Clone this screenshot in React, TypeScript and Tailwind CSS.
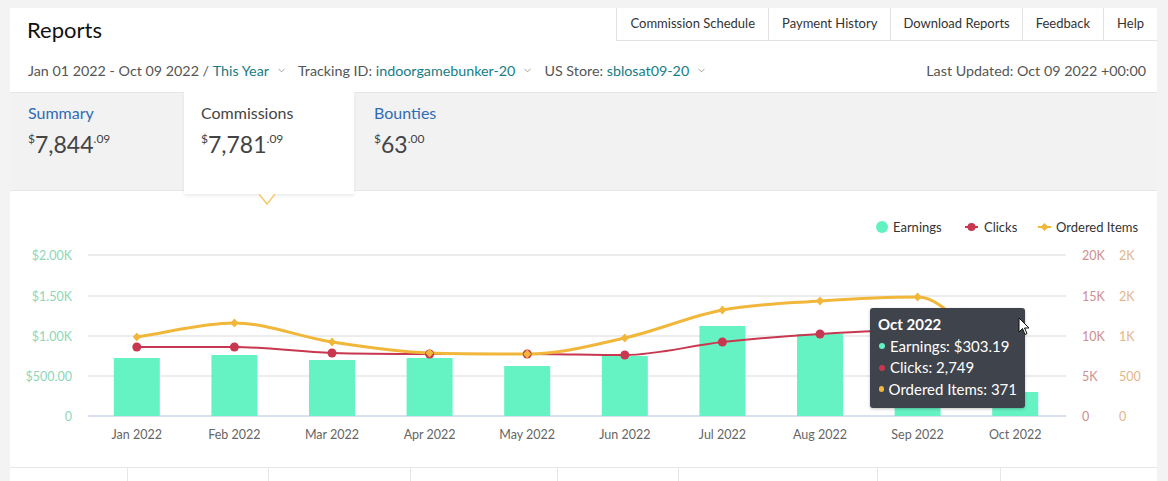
import { ChevronDown } from 'lucide-react'

const months = ['Jan', 'Feb', 'Mar', 'Apr', 'May', 'Jun', 'Jul', 'Aug', 'Sep', 'Oct']
// chart-space y values (px from top of the chart panel)
const barTops = [167, 164, 169, 167, 175, 165, 135, 143, 150, 201]
const clicks = [156, 156, 162, 163, 163, 164, 151, 143, 139, 203]
const ordered = [146, 132, 151, 162, 163, 147, 119, 110, 106, 195]

const BASE = 225
const X0 = 78
const STEP = 97.6
const xAt = (i: number) => X0 + STEP / 2 + i * STEP

// monotone cubic, so the curve never overshoots a point
function smoothPath(ys: number[]) {
  const n = ys.length
  const d: number[] = []
  for (let i = 0; i < n - 1; i++) d.push((ys[i + 1] - ys[i]) / STEP)
  const m: number[] = new Array(n)
  m[0] = d[0]
  m[n - 1] = d[n - 2]
  for (let i = 1; i < n - 1; i++) {
    m[i] = d[i - 1] * d[i] <= 0 ? 0 : (d[i - 1] + d[i]) / 2
  }
  for (let i = 0; i < n - 1; i++) {
    if (d[i] === 0) {
      m[i] = 0
      m[i + 1] = 0
      continue
    }
    const a = m[i] / d[i]
    const b = m[i + 1] / d[i]
    const s = a * a + b * b
    if (s > 9) {
      const t = 3 / Math.sqrt(s)
      m[i] = t * a * d[i]
      m[i + 1] = t * b * d[i]
    }
  }
  let path = `M${xAt(0)},${ys[0]}`
  for (let i = 0; i < n - 1; i++) {
    const h = STEP / 3
    path += ` C${xAt(i) + h},${ys[i] + m[i] * h} ${xAt(i + 1) - h},${ys[i + 1] - m[i + 1] * h} ${xAt(i + 1)},${ys[i + 1]}`
  }
  return path
}

function Amount({ whole, cents }: { whole: string; cents: string }) {
  return (
    <p className="mt-[7px] flex items-start text-[#444]">
      <span className="mt-[2px] text-[12px] leading-none">$</span>
      <span className="text-[23px] leading-[26px]">{whole}</span>
      <span className="mt-[2px] text-[12px] leading-none">{cents}</span>
    </p>
  )
}

function Chart() {
  const grid = [64, 105, 145, 185, 225]
  const leftLabels = ['$2.00K', '$1.50K', '$1.00K', '$500.00', '0']
  const redLabels = ['20K', '15K', '10K', '5K', '0']
  const tanLabels = ['2K', '2K', '1K', '500', '0']
  return (
    <svg width="1146" height="277" className="block" style={{ fontFamily: 'Lato, sans-serif' }}>
      {/* legend */}
      <circle cx="872" cy="36" r="6" fill="#62f2c2" />
      <text x="883" y="40.5" fontSize="13" fill="#333">Earnings</text>
      <line x1="955" y1="36" x2="968" y2="36" stroke="#c8374f" strokeWidth="2" />
      <circle cx="961.5" cy="36" r="4" fill="#c8374f" />
      <text x="974" y="40.5" fontSize="13" fill="#333">Clicks</text>
      <line x1="1028" y1="36" x2="1041" y2="36" stroke="#f0b73a" strokeWidth="2" />
      <path d="M1034.5,32 L1038.5,36 L1034.5,40 L1030.5,36 Z" fill="#f0b73a" />
      <text x="1046" y="40.5" fontSize="13" fill="#333">Ordered Items</text>

      {/* grid */}
      {grid.slice(0, 4).map((y) => (
        <line key={y} x1="78" y1={y} x2="1056" y2={y} stroke="#e6e6e6" strokeWidth="1.5" />
      ))}
      <line x1="78" y1={BASE} x2="1056" y2={BASE} stroke="#ccd6eb" strokeWidth="1.5" />

      {/* axis labels */}
      {leftLabels.map((l, i) => (
        <text key={l} x="62" y={grid[i] + 5} fontSize="12.5" fill="#8ed6b6" textAnchor="end">{l}</text>
      ))}
      {redLabels.map((l, i) => (
        <text key={l} x="1072" y={grid[i] + 5} fontSize="12.5" fill="#d08e8e">{l}</text>
      ))}
      {tanLabels.map((l, i) => (
        <text key={i} x="1109" y={grid[i] + 5} fontSize="12.5" fill="#e2b58a">{l}</text>
      ))}
      {months.map((m, i) => (
        <text key={m} x={xAt(i)} y="247.5" fontSize="12.5" fill="#666" textAnchor="middle">{m} 2022</text>
      ))}

      {/* bars */}
      {barTops.map((t, i) => (
        <rect key={i} x={xAt(i) - 23} y={t} width="46" height={BASE - t} fill="#65f3c3" />
      ))}

      {/* lines */}
      <path d={smoothPath(clicks)} fill="none" stroke="#c8374f" strokeWidth="2" />
      <path d={smoothPath(ordered)} fill="none" stroke="#f0b73a" strokeWidth="3" />
      {clicks.map((y, i) => (
        <circle key={i} cx={xAt(i)} cy={y} r="4.5" fill="#c8374f" />
      ))}
      {ordered.map((y, i) => {
        const x = xAt(i)
        return <path key={i} d={`M${x},${y - 4.5} L${x + 4},${y} L${x},${y + 4.5} L${x - 4},${y} Z`} fill="#f0b73a" />
      })}
    </svg>
  )
}

export default function App() {
  return (
    <div className="min-h-screen bg-[#f3f3f3] pt-2 pr-[11px] pl-[10px]" style={{ fontFamily: 'Lato, "Noto Sans", sans-serif' }}>
      <div className="overflow-hidden bg-white">
        {/* header */}
        <div className="flex h-[33px] items-start justify-between">
          <h1 className="pt-[11px] pl-[17px] text-[22px] leading-[22px] text-[#111]">Reports</h1>
          <nav className="flex h-[33px] border-b border-l border-[#e1e1e1] text-[13px] text-[#333]">
            <a className="flex items-center px-[13px]">Commission Schedule</a>
            <a className="flex items-center border-l border-[#e1e1e1] px-[13px]">Payment History</a>
            <a className="flex items-center border-l border-[#e1e1e1] px-[12px]">Download Reports</a>
            <a className="flex items-center border-l border-[#e1e1e1] px-[13px]">Feedback</a>
            <a className="flex items-center border-l border-[#e1e1e1] px-[13px]">Help</a>
          </nav>
        </div>
        <div className="flex h-[51px] items-center justify-between pt-[8px] pr-[11px] pl-[18px] text-[14.3px] text-[#555]">
          <div className="flex items-center">
            <span>Jan 01 2022 - Oct 09 2022 /&nbsp;</span>
            <span className="text-[#177d86]">This Year</span>
            <ChevronDown className="mr-[11px] ml-[7px] size-[11px] text-[#999]" strokeWidth={2} />
            <span>Tracking ID:&nbsp;</span>
            <span className="text-[#177d86]">indoorgamebunker-20</span>
            <ChevronDown className="mr-[11px] ml-[7px] size-[11px] text-[#999]" strokeWidth={2} />
            <span>US Store:&nbsp;</span>
            <span className="text-[#177d86]">sblosat09-20</span>
            <ChevronDown className="ml-[7px] size-[11px] text-[#999]" strokeWidth={2} />
          </div>
          <span>Last Updated: Oct 09 2022 +00:00</span>
        </div>

        {/* tabs */}
        <div className="flex h-[98px] border-t border-[#e6e6e6] bg-[#f2f2f3]">
          <div className="w-[174px] pt-[9px] pl-[18px]">
            <p className="text-[16px] leading-[22px] text-[#2f6cb3]">Summary</p>
            <Amount whole="7,844" cents=".09" />
          </div>
          <div className="relative z-10 -mt-px h-[102px] w-[170px] bg-white pt-[10px] pl-[17px] shadow-[0_2px_3px_rgba(0,0,0,0.08)]">
            <p className="text-[16px] leading-[22px] text-[#444]">Commissions</p>
            <Amount whole="7,781" cents=".09" />
            <svg className="absolute top-full left-[74px]" width="18" height="12" viewBox="0 0 18 12">
              <path d="M1,0 L9,10 L17,0" fill="#fff" stroke="#f6c86d" strokeWidth="1.5" />
            </svg>
          </div>
          <div className="pt-[9px] pl-[20px]">
            <p className="text-[16px] leading-[22px] text-[#2f6cb3]">Bounties</p>
            <Amount whole="63" cents=".00" />
          </div>
        </div>

        {/* chart */}
        <div className="relative h-[277px] border-t border-[#e6e6e6]">
          <Chart />
          <div className="absolute top-[117px] left-[860px] h-[100px] w-[155px] rounded-[3px] bg-[#3f434b] px-[8px] pt-[6px] text-[15px] leading-[21.5px] whitespace-nowrap text-white shadow-[0_1px_3px_rgba(0,0,0,0.25)]">
            <p className="font-bold">Oct 2022</p>
            <p className="flex items-center">
              <span className="mr-[5px] ml-[1px] size-[6px] rounded-full bg-[#62f2c2]" />
              Earnings: $303.19
            </p>
            <p className="flex items-center">
              <span className="mr-[5px] ml-[1px] size-[6px] rounded-full bg-[#c8374f]" />
              Clicks: 2,749
            </p>
            <p className="flex items-center">
              <span className="mr-[5px] ml-[1px] size-[6px] rounded-full bg-[#f0b73a]" />
              Ordered Items: 371
            </p>
          </div>
          <svg className="absolute top-[126px] left-[1008px]" width="12" height="19" viewBox="0 0 12 19">
            <path d="M1,1 L1,15 L4.5,11.5 L7,17.5 L9,16.5 L6.5,11 L11,11 Z" fill="#fff" stroke="#111" strokeWidth="1" strokeLinejoin="round" />
          </svg>
        </div>

        {/* bottom row */}
        <div className="flex h-[40px] border-t border-[#e6e6e6]">
          <div className="w-[117px]" />
          <div className="w-[141px] border-l border-[#e6e6e6]" />
          <div className="w-[142px] border-l border-[#e6e6e6]" />
          <div className="w-[147px] border-l border-[#e6e6e6]" />
          <div className="w-[121px] border-l border-[#e6e6e6]" />
          <div className="w-[199px] border-l border-[#e6e6e6]" />
          <div className="w-[123px] border-l border-[#e6e6e6]" />
          <div className="flex-1 border-l border-[#e6e6e6]" />
        </div>
      </div>
    </div>
  )
}
